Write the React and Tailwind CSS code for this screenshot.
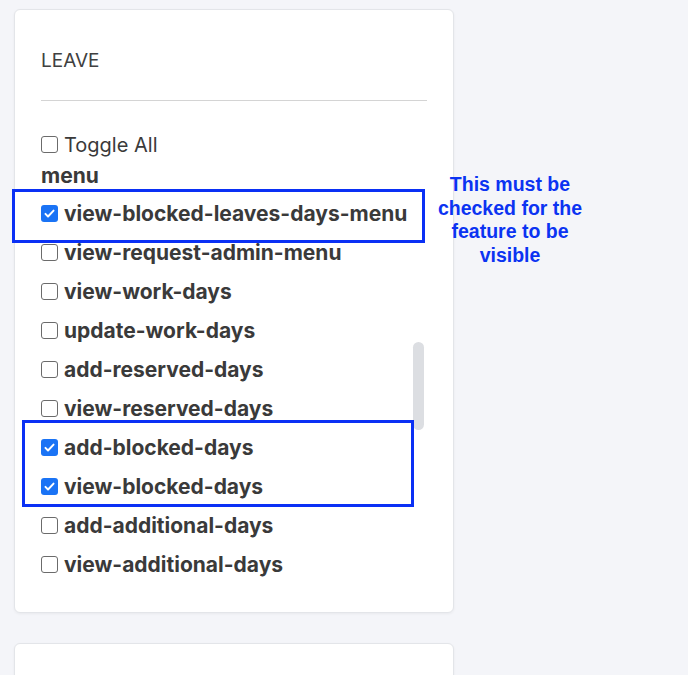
import React from "react";

const permissions = [
  { name: "view-blocked-leaves-days-menu", checked: true },
  { name: "view-request-admin-menu", checked: false },
  { name: "view-work-days", checked: false },
  { name: "update-work-days", checked: false },
  { name: "add-reserved-days", checked: false },
  { name: "view-reserved-days", checked: false },
  { name: "add-blocked-days", checked: true },
  { name: "view-blocked-days", checked: true },
  { name: "add-additional-days", checked: false },
  { name: "view-additional-days", checked: false },
];

function Box({ checked }) {
  if (checked) {
    return (
      <span className="flex h-[17px] w-[17px] shrink-0 items-center justify-center rounded-[3px] bg-[#1a73f5]">
        <svg viewBox="0 0 16 16" className="h-[13px] w-[13px]" fill="none">
          <path d="M3 8.5l3.2 3.2L13 4.5" stroke="white" strokeWidth="2.4" strokeLinecap="round" strokeLinejoin="round" />
        </svg>
      </span>
    );
  }
  return <span className="block h-[17px] w-[17px] shrink-0 rounded-[3px] border border-[#6b6b6b] bg-white" />;
}

export default function App() {
  return (
    <div className="relative h-[675px] overflow-hidden bg-[#f4f5f9] pl-[14px] pt-[9px] font-['Inter',sans-serif] text-[#3a3a3a]">
      <div className="flex">
        {/* permissions card */}
        <div className="relative w-[440px] rounded-md border border-[#e3e5e9] bg-white px-[26px] pb-[28px] pt-[39px] shadow-[0_1px_3px_rgba(0,0,0,0.05)]">
          <div className="text-[19px] leading-[24px] text-[#404040]">LEAVE</div>
          <div className="mt-[27px] h-px w-[386px] bg-[#d4d4d4]" />

          <div className="mt-[28px] flex h-[31px] items-center gap-[6px]">
            <Box checked={false} />
            <span className="text-[20px]">Toggle All</span>
          </div>
          <div className="flex h-[31px] items-center text-[21px] font-bold">menu</div>

          <div className="mt-[3px]">
            {permissions.map((p) => (
              <div key={p.name} className="flex h-[39px] items-center gap-[6px]">
                <Box checked={p.checked} />
                <span className="text-[21px] font-bold">{p.name}</span>
              </div>
            ))}
          </div>

          {/* scrollbar thumb */}
          <div className="absolute left-[398px] top-[332px] h-[88px] w-[11px] rounded-full bg-[#dcdee2]" />
        </div>

        {/* annotation */}
        <div className="relative ml-[-34px] mt-[164px] w-[180px] text-center font-['Liberation_Sans',Arial,sans-serif] text-[19.5px] font-bold leading-[23.7px] text-[#0b33f2]">
          This must be checked for the feature to be visible
        </div>
      </div>

      <div className="mt-[30px] h-[120px] w-[440px] rounded-md border border-[#e3e5e9] bg-white shadow-[0_1px_3px_rgba(0,0,0,0.05)]" />

      {/* highlight boxes */}
      <div className="absolute left-[12px] top-[189px] h-[54px] w-[413px] border-[3px] border-[#0a30f5]" />
      <div className="absolute left-[22px] top-[420px] h-[87px] w-[392px] border-[3px] border-[#0a30f5]" />
    </div>
  );
}
